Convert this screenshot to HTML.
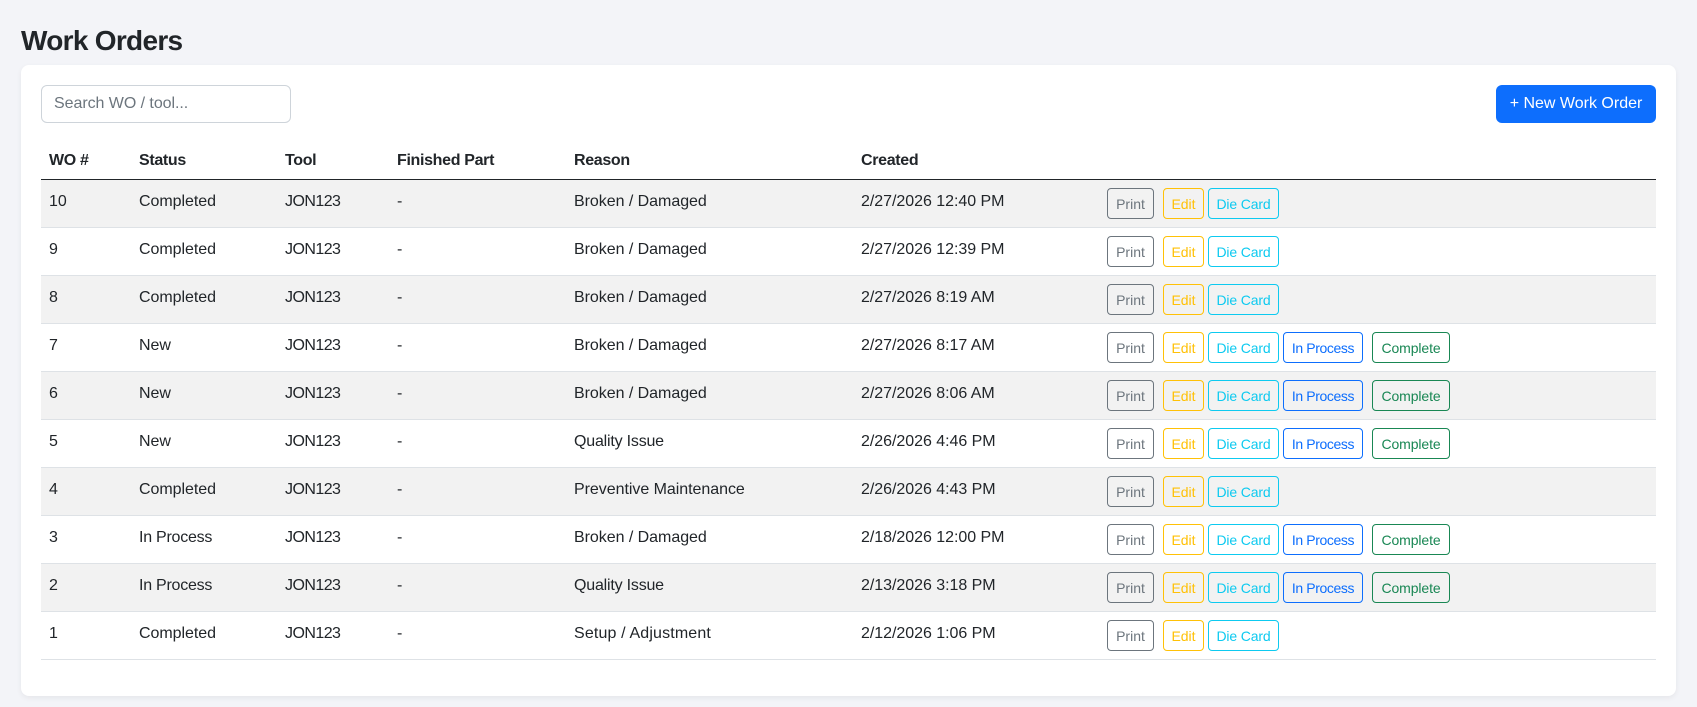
<!DOCTYPE html>
<html><head><meta charset="utf-8"><title>Work Orders</title>
<style>
*{box-sizing:border-box}
html,body{margin:0;padding:0;width:1697px;height:707px;overflow:hidden;background:#f3f4f8;font-family:"Liberation Sans",sans-serif;color:#212529;font-size:16px}
h1{position:absolute;left:21px;top:24px;margin:0;font-size:28px;line-height:34px;font-weight:700;letter-spacing:-.7px}
.card{position:absolute;left:21px;top:65px;width:1655px;height:631px;background:#fff;border-radius:8px;box-shadow:0 2px 6px rgba(0,0,0,.06)}
input{position:absolute;left:20px;top:20px;width:250px;height:38px;border:1px solid #ced4da;border-radius:6px;padding:6px 12px;font:16px "Liberation Sans",sans-serif;letter-spacing:-.05px;outline:0;background:#fff}
input::placeholder{color:#6c757d;opacity:1}
.new{position:absolute;left:1475px;top:20px;width:160px;height:38px;background:#0d6efd;color:#fff;border-radius:6px;text-align:center;line-height:38px;font-size:16px;letter-spacing:0}
table{position:absolute;left:20px;top:74px;width:1615px;border-collapse:collapse;table-layout:fixed}
th{height:40px;padding:10px 8px 5px;text-align:left;font-weight:700;line-height:24px;letter-spacing:-.33px;border-bottom:1px solid #212529;vertical-align:top}
td{height:48px;padding:10px 8px 0;line-height:24px;vertical-align:top;border-bottom:1px solid #dee2e6;white-space:nowrap;letter-spacing:-.04px}
td:nth-child(3){letter-spacing:-.55px}
tr.s td{background:#f2f2f2}
.b{display:flex;padding-top:0}
.b span{display:block;height:31px;border:1px solid;border-radius:4px;font-size:14px;line-height:31px;text-align:center;letter-spacing:0}
.p{width:47px;margin-right:9px;color:#6c757d;border-color:#6c757d!important}
.e{width:41px;margin-right:4px;color:#ffc107;border-color:#ffc107!important}
.d{width:71px;margin-right:4px;color:#0dcaf0;border-color:#0dcaf0!important;letter-spacing:-.15px!important}
.i{width:80px;margin-right:9px;color:#0d6efd;border-color:#0d6efd!important;letter-spacing:-.4px!important}
.c{width:78px;color:#198754;border-color:#198754!important;letter-spacing:-.1px!important}
td.a{padding:8px 8px 0 8px;letter-spacing:0}
.ip{letter-spacing:-.25px}
.su{letter-spacing:.15px}
.q{letter-spacing:-.2px}
</style></head><body>
<h1>Work Orders</h1>
<div class="card">
<input type="text" placeholder="Search WO / tool...">
<div class="new">+ New Work Order</div>
<table>
<colgroup><col style="width:90px"><col style="width:146px"><col style="width:112px"><col style="width:177px"><col style="width:287px"><col style="width:246px"><col></colgroup>
<thead><tr><th>WO #</th><th>Status</th><th>Tool</th><th>Finished Part</th><th>Reason</th><th>Created</th><th></th></tr></thead>
<tbody>
<tr class="s"><td>10</td><td>Completed</td><td>JON123</td><td>-</td><td>Broken / Damaged</td><td>2/27/2026 12:40 PM</td><td class="a"><div class="b"><span class="p">Print</span><span class="e">Edit</span><span class="d">Die Card</span></div></td></tr>
<tr><td>9</td><td>Completed</td><td>JON123</td><td>-</td><td>Broken / Damaged</td><td>2/27/2026 12:39 PM</td><td class="a"><div class="b"><span class="p">Print</span><span class="e">Edit</span><span class="d">Die Card</span></div></td></tr>
<tr class="s"><td>8</td><td>Completed</td><td>JON123</td><td>-</td><td>Broken / Damaged</td><td>2/27/2026 8:19 AM</td><td class="a"><div class="b"><span class="p">Print</span><span class="e">Edit</span><span class="d">Die Card</span></div></td></tr>
<tr><td>7</td><td>New</td><td>JON123</td><td>-</td><td>Broken / Damaged</td><td>2/27/2026 8:17 AM</td><td class="a"><div class="b"><span class="p">Print</span><span class="e">Edit</span><span class="d">Die Card</span><span class="i">In Process</span><span class="c">Complete</span></div></td></tr>
<tr class="s"><td>6</td><td>New</td><td>JON123</td><td>-</td><td>Broken / Damaged</td><td>2/27/2026 8:06 AM</td><td class="a"><div class="b"><span class="p">Print</span><span class="e">Edit</span><span class="d">Die Card</span><span class="i">In Process</span><span class="c">Complete</span></div></td></tr>
<tr><td>5</td><td>New</td><td>JON123</td><td>-</td><td class="q">Quality Issue</td><td>2/26/2026 4:46 PM</td><td class="a"><div class="b"><span class="p">Print</span><span class="e">Edit</span><span class="d">Die Card</span><span class="i">In Process</span><span class="c">Complete</span></div></td></tr>
<tr class="s"><td>4</td><td>Completed</td><td>JON123</td><td>-</td><td>Preventive Maintenance</td><td>2/26/2026 4:43 PM</td><td class="a"><div class="b"><span class="p">Print</span><span class="e">Edit</span><span class="d">Die Card</span></div></td></tr>
<tr><td>3</td><td class="ip">In Process</td><td>JON123</td><td>-</td><td>Broken / Damaged</td><td>2/18/2026 12:00 PM</td><td class="a"><div class="b"><span class="p">Print</span><span class="e">Edit</span><span class="d">Die Card</span><span class="i">In Process</span><span class="c">Complete</span></div></td></tr>
<tr class="s"><td>2</td><td class="ip">In Process</td><td>JON123</td><td>-</td><td class="q">Quality Issue</td><td>2/13/2026 3:18 PM</td><td class="a"><div class="b"><span class="p">Print</span><span class="e">Edit</span><span class="d">Die Card</span><span class="i">In Process</span><span class="c">Complete</span></div></td></tr>
<tr><td>1</td><td>Completed</td><td>JON123</td><td>-</td><td class="su">Setup / Adjustment</td><td>2/12/2026 1:06 PM</td><td class="a"><div class="b"><span class="p">Print</span><span class="e">Edit</span><span class="d">Die Card</span></div></td></tr>
</tbody></table>
</div>
</body></html>
